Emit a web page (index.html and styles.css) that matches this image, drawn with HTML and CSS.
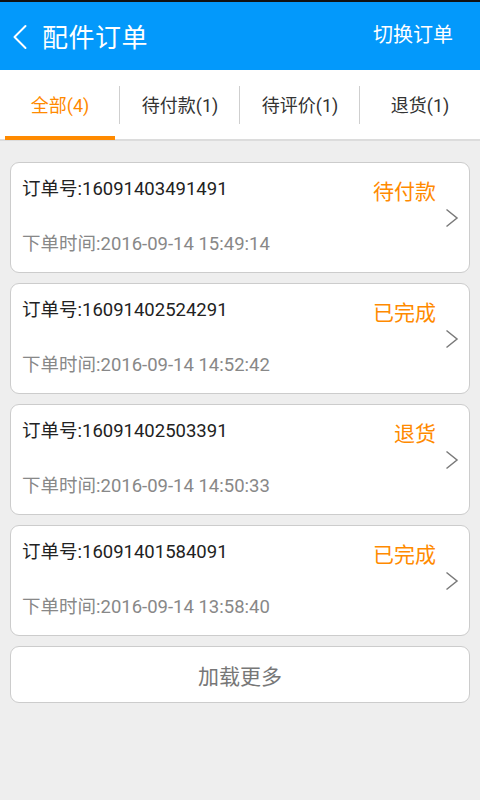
FILE: index.html
```html
<!DOCTYPE html>
<html lang="zh-CN">
<head>
<meta charset="utf-8">
<title>配件订单</title>
<link rel="stylesheet" href="styles.css">
</head>
<body>
<div class="statusbar"></div>
<header class="appbar">
  <div class="appbar-left">
    <svg class="back" width="18" height="26" viewBox="0 0 18 26"><path d="M14.5 2 L3.5 13 L14.5 24" fill="none" stroke="#fff" stroke-width="2" stroke-linecap="round" stroke-linejoin="round"/></svg>
    <h1 class="title">配件订单</h1>
  </div>
  <div class="switch">切换订单</div>
</header>
<nav class="tabs">
  <div class="tab active"><span>全部(4)</span></div>
  <div class="tab"><span>待付款(1)</span></div>
  <div class="tab"><span>待评价(1)</span></div>
  <div class="tab last"><span>退货(1)</span></div>
</nav>
<main class="list">
  <div class="card">
    <div class="info">
      <div class="order-no">订单号:16091403491491</div>
      <div class="time">下单时间:2016-09-14 15:49:14</div>
    </div>
    <div class="status">待付款</div>
    <svg class="chev" width="14" height="20" viewBox="0 0 14 20"><path d="M1.5 1.5 L12 10 L1.5 18.5" fill="none" stroke="#7a7a7a" stroke-width="1.5"/></svg>
  </div>
  <div class="card">
    <div class="info">
      <div class="order-no">订单号:16091402524291</div>
      <div class="time">下单时间:2016-09-14 14:52:42</div>
    </div>
    <div class="status">已完成</div>
    <svg class="chev" width="14" height="20" viewBox="0 0 14 20"><path d="M1.5 1.5 L12 10 L1.5 18.5" fill="none" stroke="#7a7a7a" stroke-width="1.5"/></svg>
  </div>
  <div class="card">
    <div class="info">
      <div class="order-no">订单号:16091402503391</div>
      <div class="time">下单时间:2016-09-14 14:50:33</div>
    </div>
    <div class="status">退货</div>
    <svg class="chev" width="14" height="20" viewBox="0 0 14 20"><path d="M1.5 1.5 L12 10 L1.5 18.5" fill="none" stroke="#7a7a7a" stroke-width="1.5"/></svg>
  </div>
  <div class="card">
    <div class="info">
      <div class="order-no">订单号:16091401584091</div>
      <div class="time">下单时间:2016-09-14 13:58:40</div>
    </div>
    <div class="status">已完成</div>
    <svg class="chev" width="14" height="20" viewBox="0 0 14 20"><path d="M1.5 1.5 L12 10 L1.5 18.5" fill="none" stroke="#7a7a7a" stroke-width="1.5"/></svg>
  </div>
  <div class="more">加载更多</div>
</main>
</body>
</html>
```
FILE: styles.css
```css
* { box-sizing: border-box; }
html, body {
  margin: 0;
  padding: 0;
}
body {
  width: 480px;
  min-height: 800px;
  background: #eeeeee;
  font-family: Roboto, "Noto Sans CJK SC", sans-serif;
}
.statusbar {
  height: 2px;
  background: #111;
}
.appbar {
  height: 68px;
  background: #0399fb;
  display: flex;
  align-items: center;
  justify-content: space-between;
  padding: 0 27px 0 11px;
  color: #fff;
}
.appbar-left {
  display: flex;
  align-items: center;
}
.back {
  display: block;
  margin-top: 2px;
}
.title {
  margin: 4px 0 0 13px;
  font-size: 26px;
  font-weight: normal;
  line-height: 30px;
  letter-spacing: 0.5px;
}
.switch {
  font-size: 20px;
  line-height: 24px;
  margin-top: -2px;
}
.tabs {
  height: 71px;
  background: #fff;
  display: flex;
  border-bottom: 2px solid #dcdcdc;
}
.tab {
  width: 120px;
  display: flex;
  align-items: center;
  justify-content: center;
  position: relative;
  font-size: 18px;
  color: #333;
  padding-bottom: 2px;
}
.tab::after {
  content: "";
  position: absolute;
  right: 0;
  top: 16px;
  width: 1px;
  height: 38px;
  background: #cfcfcf;
}
.tab.last::after { display: none; }
.tab.active { color: #ff8a00; }
.tab.active::before {
  content: "";
  position: absolute;
  left: 5px;
  width: 110px;
  bottom: -1px;
  height: 4px;
  background: #ff8a00;
}
.list {
  padding: 21px 10px 0;
  display: flex;
  flex-direction: column;
  gap: 10px;
}
.card {
  height: 111px;
  background: #fff;
  border: 1.5px solid #cccccc;
  border-radius: 9px;
  display: flex;
  padding: 0 10px 0 11px;
}
.info {
  flex: 1;
  display: flex;
  flex-direction: column;
  padding-top: 16px;
}
.order-no {
  font-size: 18.5px;
  line-height: 20px;
  color: #222;
}
.time {
  margin-top: 35px;
  font-size: 18.5px;
  line-height: 20px;
  color: #888;
}
.status {
  align-self: flex-start;
  margin-top: 17px;
  font-size: 21px;
  line-height: 24px;
  color: #ff8a00;
}
.chev {
  align-self: center;
  margin-left: 9px;
  margin-top: 1px;
}
.more {
  height: 57px;
  background: #fff;
  border: 1.5px solid #cccccc;
  border-radius: 9px;
  display: flex;
  align-items: center;
  justify-content: center;
  font-size: 21px;
  color: #777;
}
```
